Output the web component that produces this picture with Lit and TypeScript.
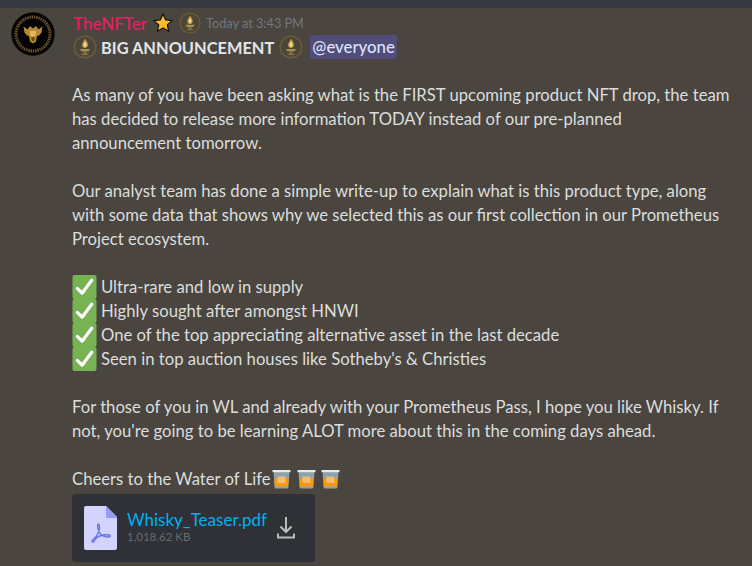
import { LitElement, html, css } from "lit";
import { customElement } from "lit/decorators.js";

const torch = (cls: string) => html`<svg class=${cls} viewBox="0 0 24 24">
  <circle cx="12" cy="12" r="10.800" fill="#4b463a" stroke="#6a5a36" stroke-width="1.500"/>
  <path d="M12 3.800c1.800 2.700 3.300 4.300 2.900 6.700-.3 1.600-1.500 2.500-2.900 2.500s-2.600-.9-2.900-2.500C8.700 8.100 11 6.500 12 3.800z" fill="#c79a3e"/>
  <path d="M12 6.500c.9 1.600 1.600 2.600 1.400 4-.2.9-.7 1.300-1.400 1.300s-1.200-.4-1.400-1.300c-.2-1.400.8-2.400 1.400-4z" fill="#f0e0a8"/>
  <path d="M7 14h10l-1.300 2.300H8.300z" fill="#a98c4f"/>
  <path d="M10.500 16.300h3v2.400h1.800V20H8.700v-1.300h1.800z" fill="#87724a"/>
</svg>`;

const check = html`<svg class="check" viewBox="0 0 24 24">
  <rect x="0" y="0" width="24" height="24" rx="2" fill="#77b255"/>
  <path d="M4.800 13.400l4.800 4.800L19.200 5.200" fill="none" stroke="#fff" stroke-width="3.200" stroke-linecap="round" stroke-linejoin="round"/>
</svg>`;

const glass = html`<svg class="glass" viewBox="0 0 19 20">
  <path d="M1.500 2h16l-1.100 16a1.600 1.600 0 0 1-1.600 1.500H4.200A1.600 1.600 0 0 1 2.600 18z" fill="#8fa3ad"/>
  <path d="M.5 1h18v2.200H.5z" fill="#e6ecef"/>
  <path d="M2.300 9.500h14.400l-.6 8H2.900z" fill="#f59a12"/>
  <rect x="5.500" y="7.500" width="8" height="6.500" rx="1.200" fill="#f8bd6a"/>
</svg>`;

@customElement("app-root")
export class AppRoot extends LitElement {
  static styles = css`
    :host {
      display: block;
      width: 752px;
      height: 566px;
      overflow: hidden;
      background: #4a463f;
      font-family: Lato, "Open Sans", sans-serif;
      color: #dcddde;
      font-size: 16.680px;
    }
    .topbar {
      height: 8px;
      background: #36393f;
    }
    .message {
      display: grid;
      grid-template-columns: 44px 1fr;
      column-gap: 17px;
      padding: 4px 0 0 11px;
    }
    .avatar {
      width: 44px;
      height: 44px;
      display: block;
    }
    .body {
      min-width: 0;
    }
    .head {
      display: flex;
      align-items: center;
      height: 22px;
    }
    .name {
      color: #e91e63;
      font-size: 17px;
      font-weight: 500;
      margin-left: 1px;
    }
    .star {
      width: 20px;
      height: 20px;
      margin-left: 6px;
      display: block;
    }
    .torch-s {
      width: 22px;
      height: 22px;
      margin-left: 6px;
      display: block;
    }
    .time {
      color: #72767d;
      font-size: 12.700px;
      margin-left: 5px;
    }
    .title {
      display: flex;
      align-items: center;
      height: 24px;
      margin-bottom: 24px;
      margin-top: 1px;
      font-weight: 700;
      font-size: 16.400px;
      white-space: nowrap;
      color: #e3e5e8;
    }
    .title .torch-l {
      width: 24px;
      height: 24px;
      display: block;
      margin-left: 1px;
    }
    .title span.b {
      margin: 0 4px;
    }
    .mention {
      margin-left: 7px;
      height: 24px;
      line-height: 24px;
      padding: 0 2px;
      border-radius: 3px;
      background: #504e78;
      color: #dee0fc;
      font-weight: 500;
      font-size: 16.800px;
    }
    .line {
      height: 24px;
      line-height: 24px;
      white-space: nowrap;
    }
    .gap {
      height: 24px;
    }
    .item {
      display: flex;
      align-items: center;
      gap: 4px;
    }
    .check {
      width: 25px;
      height: 24px;
      display: block;
    }
    .cheers {
      display: flex;
      align-items: center;
    }
    .cheers span {
      margin-right: 1.500px;
    }
    .glass {
      width: 19px;
      height: 20px;
      margin-right: 5.500px;
      display: block;
    }
    .file {
      box-sizing: border-box;
      width: 243px;
      height: 68px;
      margin-top: 3px;
      padding: 12px 20px 0 12px;
      display: flex;
      align-items: flex-start;
      background: #2f3136;
      border-radius: 3px;
    }
    .pdf {
      width: 33px;
      height: 44px;
      display: block;
      flex: none;
    }
    .meta {
      margin-left: 10px;
      flex: 1;
      min-width: 0;
    }
    .fname {
      color: #00aff4;
      font-size: 17px;
      line-height: 22px;
      margin-top: 3px;
      white-space: nowrap;
    }
    .size {
      color: #676a70;
      font-size: 11.500px;
      line-height: 14px;
      margin-top: -1px;
      white-space: nowrap;
    }
    .dl {
      width: 18px;
      height: 22px;
      margin-top: 11px;
      display: block;
      flex: none;
    }
  `;

  render() {
    const lines = (arr: string[]) => arr.map((t) => html`<div class="line">${t}</div>`);
    const items = [
      "Ultra-rare and low in supply",
      "Highly sought after amongst HNWI",
      "One of the top appreciating alternative asset in the last decade",
      "Seen in top auction houses like Sotheby's & Christies",
    ];
    return html`
      <div class="topbar"></div>
      <div class="message">
        <svg class="avatar" viewBox="0 0 44 44">
          <circle cx="22" cy="22" r="21.700" fill="#050403"/>
          <circle cx="22" cy="22" r="17" fill="none" stroke="#6a5430" stroke-width="3" stroke-dasharray="1.500 0.800"/>
          <path d="M12.500 14.500l4 3 2.500-3.500 3 2.500 3-2.500 2.500 3.500 4-3-1 6-2.500 3-2 .5-1 5.500-3 2-3-2-1-5.500-2-.5-2.500-3z" fill="#b98a34"/>
          <path d="M19 19h6v3.500l-1.500 2h-3l-1.500-2z" fill="#e3b860"/>
          <path d="M20.500 25h3v3.500l-1.500 1-1.500-1z" fill="#6e4c17"/>
        </svg>
        <div class="body">
          <div class="head">
            <span class="name">TheNFTer</span>
            <svg class="star" viewBox="0 0 20 20">
              <path d="M10 .9l2.700 6 6.400.7-4.800 4.300 1.400 6.400L10 15.100l-5.700 3.200 1.400-6.400L.9 7.600l6.400-.7z" fill="#fdb92e" stroke="#111" stroke-width="1.200" stroke-linejoin="round"/>
            </svg>
            ${torch("torch-s")}
            <span class="time">Today at 3:43 PM</span>
          </div>
          <div class="title">
            ${torch("torch-l")}<span class="b">BIG ANNOUNCEMENT</span>${torch("torch-l")}
            <span class="mention">@everyone</span>
          </div>
          ${lines([
            "As many of you have been asking what is the FIRST upcoming product NFT drop, the team",
            "has decided to release more information TODAY instead of our pre-planned",
            "announcement tomorrow.",
          ])}
          <div class="gap"></div>
          ${lines([
            "Our analyst team has done a simple write-up to explain what is this product type, along",
            "with some data that shows why we selected this as our first collection in our Prometheus",
            "Project ecosystem.",
          ])}
          <div class="gap"></div>
          ${items.map((t) => html`<div class="line item">${check}<span>${t}</span></div>`)}
          <div class="gap"></div>
          ${lines([
            "For those of you in WL and already with your Prometheus Pass, I hope you like Whisky. If",
            "not, you're going to be learning ALOT more about this in the coming days ahead.",
          ])}
          <div class="gap"></div>
          <div class="line cheers"><span>Cheers to the Water of Life</span>${glass}${glass}${glass}</div>
          <div class="file">
            <svg class="pdf" viewBox="0 0 33 44">
              <path d="M2 0h20l11 11v31a2 2 0 0 1-2 2H2a2 2 0 0 1-2-2V2a2 2 0 0 1 2-2z" fill="#d2d4fe"/>
              <path d="M22 0l11 11v1H23a1 1 0 0 1-1-1z" fill="#949cf7"/>
              <path d="M8.300 36c-1.500-2 3-3.500 5.200-7.500s2.400-9.500 1.300-10.200c-2-1-1.300 5.200.8 8.400 2 3 5 4.300 8.200 4.300 3 0 3-2.200 0-2.200-4.300 0-9.200 1-11.300 3.200C10.500 33.900 9.500 37 8.300 36z" fill="none" stroke="#6773e6" stroke-width="1.400" stroke-linejoin="round"/>
            </svg>
            <div class="meta">
              <div class="fname">Whisky_Teaser.pdf</div>
              <div class="size">1,018.62 KB</div>
            </div>
            <svg class="dl" viewBox="0 0 18 22" fill="none" stroke="#b9bbbe" stroke-width="2">
              <path d="M9 0v15M3.500 9.500L9 15l5.500-5.500"/>
              <path d="M1 16.500v4h16v-4"/>
            </svg>
          </div>
        </div>
      </div>
    `;
  }
}
